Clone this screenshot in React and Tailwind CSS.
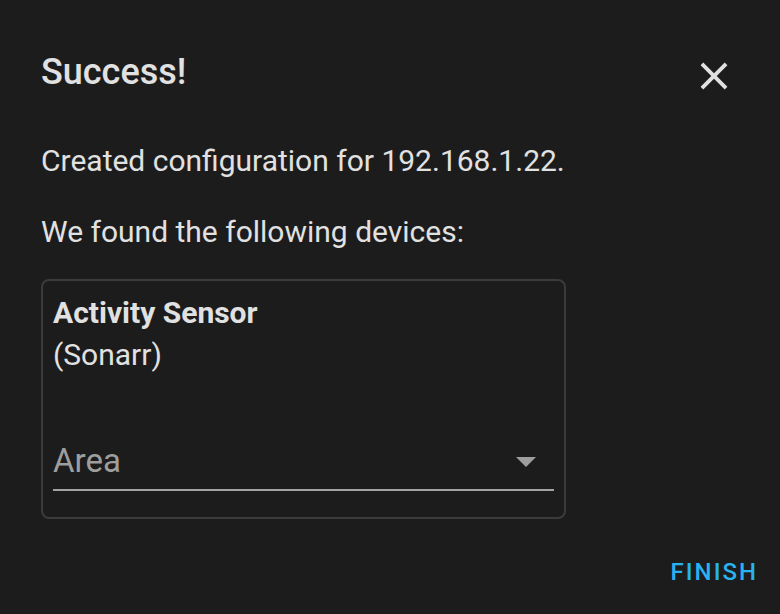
export default function App() {
  return (
    <div
      className="w-[780px] h-[614px] bg-[#1c1c1c] text-[#e1e1e1] relative overflow-hidden"
      style={{ fontFamily: "Roboto, 'Liberation Sans', sans-serif" }}
    >
      <div className="flex items-start justify-between pl-[41px] pr-[43px] pt-[49px]">
        <h2 className="text-[36px] leading-[46px] font-medium">Success!</h2>
        <button type="button" className="mt-[4px] text-[#e1e1e1]">
          <svg width="46" height="46" viewBox="0 0 24 24" fill="currentColor">
            <path d="M19,6.41L17.59,5L12,10.59L6.41,5L5,6.41L10.59,12L5,17.59L6.41,19L12,13.41L17.59,19L19,17.59L13.41,12L19,6.41Z" />
          </svg>
        </button>
      </div>

      <div className="pl-[41px] pt-[44px] text-[30px] leading-[36px]">
        <p>Created configuration for 192.168.1.22.</p>
        <p className="mt-[35px]">We found the following devices:</p>
      </div>

      <div className="ml-[41px] mt-[29px] w-[525px] h-[240px] border-2 border-[#3b3b3b] rounded-[8px] px-[10px] pt-[11px]">
        <div className="text-[30px] leading-[42px] font-bold">Activity Sensor</div>
        <div className="text-[30px] leading-[42px]">(Sonarr)</div>
        <div className="mt-[61px] flex items-center justify-between border-b-2 border-[#a3a3a3] h-[54px] pb-[4px]">
          <span className="text-[33px] text-[#9e9e9e]">Area</span>
          <svg width="24" height="12" viewBox="0 0 24 12" className="mr-[16px] mt-[2px]">
            <path d="M2 1 L22 1 L12 11 Z" fill="#9e9e9e" />
          </svg>
        </div>
      </div>

      <div className="flex justify-end pr-[22px] pt-[35px]">
        <button type="button" className="text-[24px] font-medium tracking-[2px] text-[#29b1f0]">
          FINISH
        </button>
      </div>
    </div>
  );
}
